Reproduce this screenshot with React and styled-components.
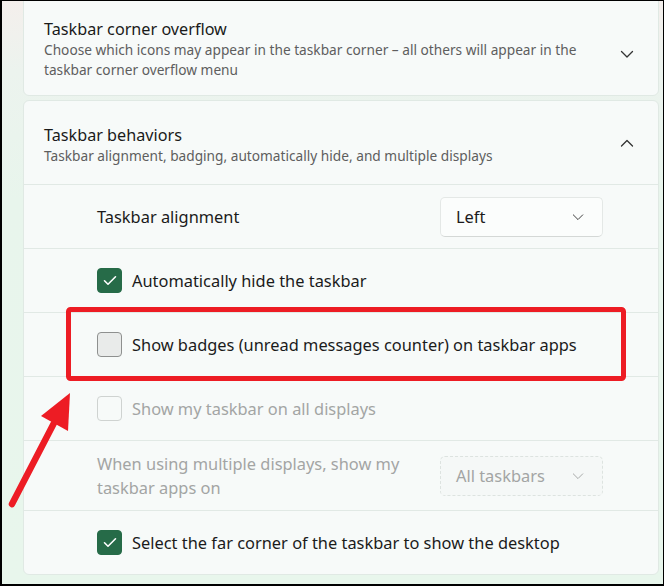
import React from "react";
import styled, { createGlobalStyle } from "styled-components";

const Global = createGlobalStyle`
  html, body { margin: 0; padding: 0; }
  body { font-family: "Noto Sans", "Open Sans", sans-serif; -webkit-font-smoothing: antialiased; }
`;

const Frame = styled.div`
  position: relative;
  box-sizing: border-box;
  width: 664px;
  height: 586px;
  overflow: hidden;
  border: 1px solid #000;
  border-left-width: 2px;
  border-bottom-width: 2px;
  padding: 0 4px 0 21px;
  background: linear-gradient(180deg, #f4efec 0px, #ecf3ee 70px, #e8f5ec 200px, #e8f6ec 100%);
  display: flex;
  flex-direction: column;
  gap: 4px;
`;

const Card = styled.section`
  box-sizing: border-box;
  background: #f7faf9;
  border: 1px solid #e0e9e4;
  border-radius: 6px;
  margin-top: ${(p) => p.$offset || 0}px;
`;

const Header = styled.div`
  box-sizing: border-box;
  display: flex;
  align-items: center;
  justify-content: space-between;
  height: ${(p) => p.$h}px;
  padding: ${(p) => p.$pt}px 24px 0 20px;
`;

const HeaderText = styled.div`
  display: flex;
  flex-direction: column;
  align-self: flex-start;
  max-width: 560px;
`;

const Title = styled.div`
  font-size: 16.2px;
  line-height: 22px;
  color: #1a1a1a;
`;

const Subtitle = styled.div`
  font-size: 13.7px;
  line-height: 20px;
  color: #5e5e5e;
`;

const ChevronBox = styled.div`
  width: 14px;
  height: 14px;
  display: flex;
  align-items: center;
  justify-content: center;
  align-self: center;
  color: #333;
  margin-top: ${(p) => p.$mt || 0}px;
`;

const Row = styled.div`
  box-sizing: border-box;
  display: flex;
  align-items: center;
  justify-content: space-between;
  gap: 12px;
  border-top: 1px solid #e1e9e5;
  height: ${(p) => p.$h || 64}px;
  padding: 0 55px 0 73px;
`;

const CheckLabel = styled.label`
  display: flex;
  align-items: center;
  gap: 10px;
`;

const Label = styled.span`
  font-size: 16.4px;
  line-height: 24px;
  color: ${(p) => (p.$disabled ? "#a3a5a4" : "#1b1b1b")};
  max-width: ${(p) => p.$max || "none"};
`;

const Box = styled.span`
  box-sizing: border-box;
  width: 25px;
  height: 25px;
  border-radius: 4px;
  display: inline-flex;
  align-items: center;
  justify-content: center;
  flex: none;
  background: ${(p) =>
    p.$state === "checked" ? "#266b48" : p.$state === "disabled" ? "transparent" : "#e9ebea"};
  border: 1px solid
    ${(p) =>
      p.$state === "checked" ? "#266b48" : p.$state === "disabled" ? "#cfd3d1" : "#8e908f"};
`;

const Select = styled.div`
  box-sizing: border-box;
  width: 163px;
  height: 40px;
  display: flex;
  align-items: center;
  justify-content: space-between;
  padding: 0 18px 0 15px;
  border-radius: 5px;
  background: ${(p) => (p.$disabled ? "#f5f8f7" : "#fbfdfc")};
  border: 1px ${(p) => (p.$disabled ? "dashed #dde3e0" : "solid #e4e8e6")};
  border-bottom-color: ${(p) => (p.$disabled ? "#dde3e0" : "#d4d8d6")};
  font-size: 16.4px;
  color: ${(p) => (p.$disabled ? "#a3a5a4" : "#1b1b1b")};
`;

const Overlay = styled.svg`
  position: absolute;
  left: -2px;
  top: -1px;
  pointer-events: none;
`;

const Chevron = ({ up, size = 14, color = "#333", sw = 1.3 }) => (
  <svg width={size} height={size} viewBox="0 0 14 14">
    <polyline
      points={up ? "1.5,10 7,4.5 12.5,10" : "1.5,4.5 7,10 12.5,4.5"}
      fill="none"
      stroke={color}
      strokeWidth={sw}
      strokeLinecap="round"
      strokeLinejoin="round"
    />
  </svg>
);

const Check = () => (
  <svg width="14" height="11" viewBox="0 0 14 11">
    <polyline
      points="1.5,5.8 5,9.2 12.5,1.8"
      fill="none"
      stroke="#fff"
      strokeWidth="1.6"
      strokeLinecap="round"
      strokeLinejoin="round"
    />
  </svg>
);

const CheckRow = ({ state, children }) => (
  <Row>
    <CheckLabel>
      <Box $state={state}>{state === "checked" && <Check />}</Box>
      <Label $disabled={state === "disabled"}>{children}</Label>
    </CheckLabel>
  </Row>
);

export default function App() {
  return (
    <>
      <Global />
      <Frame>
        <Card $offset={-8}>
          <Header $h={101} $pt={24}>
            <HeaderText>
              <Title>Taskbar corner overflow</Title>
              <Subtitle>
                Choose which icons may appear in the taskbar corner – all others will appear in
                the taskbar corner overflow menu
              </Subtitle>
            </HeaderText>
            <ChevronBox $mt={-6}>
              <Chevron />
            </ChevronBox>
          </Header>
        </Card>
        <Card>
          <Header $h={83} $pt={23}>
            <HeaderText>
              <Title>Taskbar behaviors</Title>
              <Subtitle>Taskbar alignment, badging, automatically hide, and multiple displays</Subtitle>
            </HeaderText>
            <ChevronBox $mt={-23}>
              <Chevron up />
            </ChevronBox>
          </Header>
          <Row>
            <Label>Taskbar alignment</Label>
            <Select>
              <span>Left</span>
              <Chevron size={12} sw={1.1} />
            </Select>
          </Row>
          <CheckRow state="checked">Automatically hide the taskbar</CheckRow>
          <CheckRow state="unchecked">Show badges (unread messages counter) on taskbar apps</CheckRow>
          <CheckRow state="disabled">Show my taskbar on all displays</CheckRow>
          <Row $h={70}>
            <Label $disabled $max="320px">
              When using multiple displays, show my taskbar apps on
            </Label>
            <Select $disabled>
              <span>All taskbars</span>
              <Chevron size={12} sw={1.1} color="#a3a5a4" />
            </Select>
          </Row>
          <CheckRow state="checked">Select the far corner of the taskbar to show the desktop</CheckRow>
        </Card>
        <Overlay width="664" height="586" viewBox="0 0 664 586">
          <rect x="68.5" y="309.5" width="555" height="69" rx="2" fill="none" stroke="#ed1c24" strokeWidth="5" />
          <line x1="12" y1="504" x2="54" y2="423" stroke="#ed1c24" strokeWidth="6.5" strokeLinecap="round" />
          <polygon points="70,393 41,416 68,431" fill="#ed1c24" />
        </Overlay>
      </Frame>
    </>
  );
}
